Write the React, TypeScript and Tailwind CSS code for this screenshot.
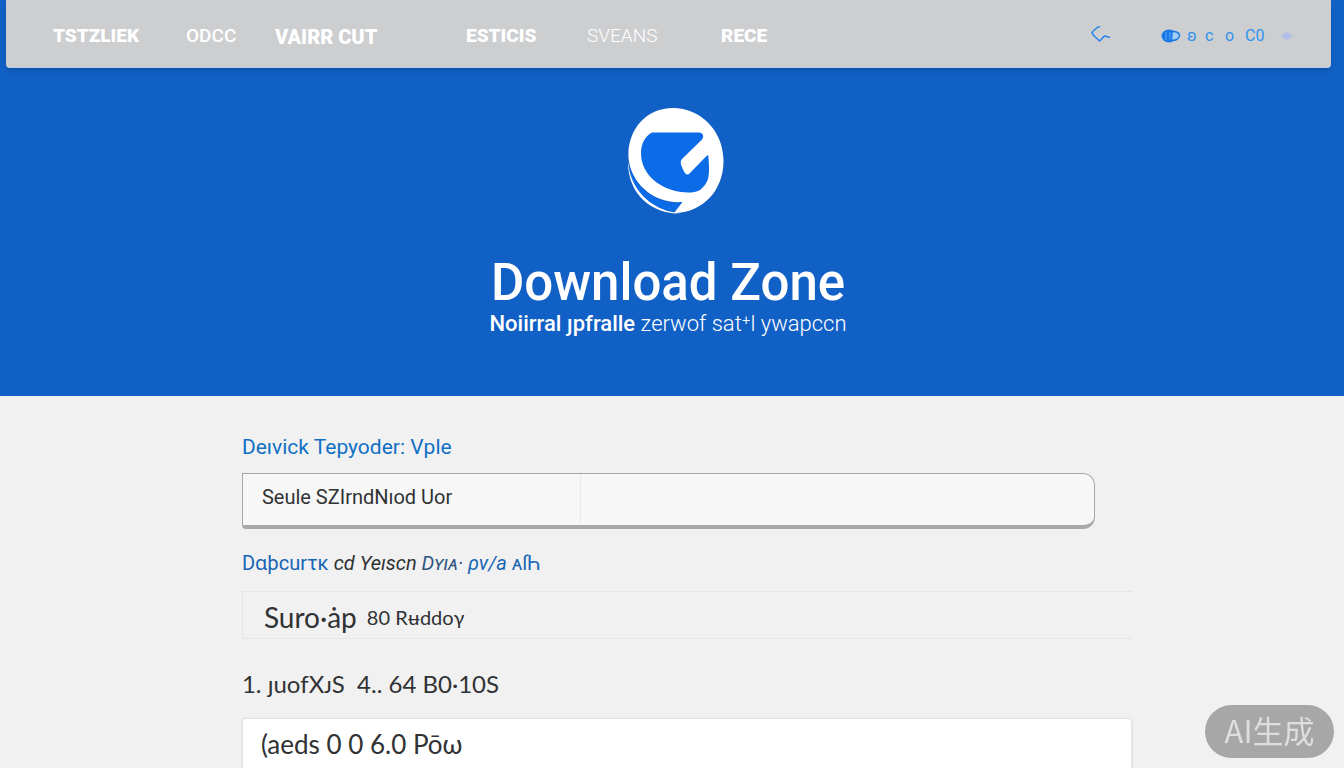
import React from 'react';

const navLinks = [
  { label: 'TSTZLIEK', className: 'w-[133px] text-[19px] font-black' },
  { label: 'ODCC', className: 'w-[89px] text-[19px] font-medium' },
  { label: 'VAIRR CUT', className: 'w-[191px] text-xl font-black' },
  { label: 'ESTICIS', className: 'w-[121px] text-[19px] font-black' },
  { label: 'SVEANS', className: 'w-[134px] text-[19px] font-light' },
  { label: 'RECE', className: 'text-[19px] font-black' },
];

const Logo = () => (
  <svg viewBox="0 0 96 106" className="ml-4 h-[106px] w-24" aria-hidden="true">
    <path d="M0 54C0 82 18 103 47 105.500L52 105C28 104 5 86 0 54Z" fill="#fff" />
    <path d="M0.500 58C4 82 22 100 46 103.500L54 95C28 96 9 82 0.500 58Z" fill="#0c6be6" />
    <path
      d="M45 0C72 0 95 22 95.500 52C96 82 75 105 46 105L54.500 94C26 96 3 76 0.500 50C-1 22 18 0 45 0Z"
      fill="#fff"
    />
    <path
      d="M24 24.500H71C75 24.500 76.500 28.500 74 31.500L54 51C52 53 52.500 56 54 59C56 64 58 68 61 66L79 47.500C80 46.500 80.500 48 80.500 50C82 68 81 75 72 82C64 86.500 51 84 44 82C25 76 13 62 13 45C13 36 17 28 24 24.500Z"
      fill="#0c6be6"
    />
  </svg>
);

const Navbar = () => (
  <header className="ml-1.5 mr-[13px] flex h-[68px] items-center justify-between rounded-b-sm border-b border-[#b9cce5] bg-[#cdced0] pl-[47px] pr-[38px] pt-1 shadow-md">
    <nav className="flex items-center whitespace-nowrap pt-0.5 text-white">
      {navLinks.map((link) => (
        <a key={link.label} href="#" className={link.className}>
          {link.label}
        </a>
      ))}
    </nav>
    <div className="flex items-center text-base text-[#2d94ee]">
      <button type="button" aria-label="Back" className="mr-[50px] pb-1">
        <svg viewBox="0 0 20 18" className="h-[18px] w-5" fill="none" stroke="#2584ee" strokeWidth="1.500">
          <path d="M9 1.500C5 2 4 4.500 1 7.500C2 11 6 13 8.500 16C11 14 12 11.500 14 11L19 12.500" />
        </svg>
      </button>
      <button type="button" aria-label="Account" className="mr-1.5">
        <svg viewBox="0 0 20 14" className="h-3.5 w-5">
          <ellipse cx="8" cy="7" rx="7.500" ry="6.500" fill="#1577e8" />
          <path d="M5 3V11M9 3V11" stroke="#62a9ef" />
          <path d="M11 2.500C16 2 19 4.500 18.500 7C18 10 14 12 10.500 11Z" fill="#a5cdf2" stroke="#1577e8" strokeWidth="1.500" />
        </svg>
      </button>
      <a href="#" className="w-[18px]">ʚ</a>
      <a href="#" className="w-5">c</a>
      <a href="#" className="w-5">o</a>
      <a href="#" className="w-9">C0</a>
      <svg viewBox="0 0 12 8" className="h-2 w-3" fill="#b3bfe6" aria-hidden="true">
        <path d="M0 4L3 1.500L6 0L9 1.500L12 4L9 6.500L6 8L3 6.500Z" />
      </svg>
    </div>
  </header>
);

const Hero = () => (
  <section className="flex flex-col items-center pb-[58px] pr-2 pt-10 text-white">
    <Logo />
    <h1 className="mt-[43px] text-[51px] font-medium leading-[52px]">Download Zone</h1>
    <p className="mt-px whitespace-pre text-[22px] leading-7">
      <span className="font-medium">Noiirral ȷpfralle </span>
      <span className="font-light">zerwof sat⁺l ywapccn</span>
    </p>
  </section>
);

const DownloadForm = () => (
  <form className="ml-[18%] w-[66.2%] pt-9 text-[#303234]">
    <label htmlFor="device" className="block text-[21px] leading-[30px] text-[#1070c4]">
      Deıvick Tepyoder: Vple
    </label>
    <div className="mr-[37px] mt-[11px] flex h-14 rounded-r-xl rounded-bl-sm border border-b-4 border-[#a8a8a8] bg-[#f7f7f7]">
      <select id="device" className="w-[338px] appearance-none border-r border-[#e9e9e9] pb-1.5 pl-[19px] text-xl outline-none">
        <option>Seule SZIrndNıod Uor</option>
      </select>
      <input aria-label="Device model" className="min-w-0 flex-1 px-4 outline-none" />
    </div>

    <h2 className="mt-[19px] whitespace-nowrap text-xl leading-[30px]">
      <span className="text-[#1765b5]">Dɑþcurτκ </span>
      <span className="italic">cd Yeıscn </span>
      <span className="italic text-[#32577f]">Dʏıᴀ· </span>
      <span className="italic text-[#1765b5]">ρv/a </span>
      <span className="text-[#1765b5]">ᴀſҺ</span>
    </h2>
    <div className="mt-[13px] flex h-12 items-center whitespace-nowrap border-y border-l border-[#e4e6e8] pl-[21px] pt-1 font-['Lato','Noto_Sans',sans-serif]">
      <span className="mr-2.5 text-[28px]">Suro·ȧp</span>
      <span className="text-xl">80 Rʉddoγ</span>
    </div>

    <label htmlFor="release" className="mt-[29px] block whitespace-pre font-['Lato','Noto_Sans',sans-serif] text-2xl">
      1. ȷuofXᴊS  4.. 64 B0·10S
    </label>
    <input
      id="release"
      defaultValue="(aeds 0 0 6.0 Pōω"
      className="mt-[18px] h-[52px] w-full rounded-t border border-b-0 border-[#e2e2e2] bg-white pb-0.5 pl-[18px] font-['Lato','Noto_Sans',sans-serif] text-[26px] shadow-sm outline-none"
    />
  </form>
);

const App = () => (
  <div className="min-h-screen overflow-hidden bg-[#f1f1f1] font-['Roboto','Noto_Sans',sans-serif]">
    <div className="bg-[#1160c6]">
      <Navbar />
      <Hero />
    </div>
    <DownloadForm />
    <div className="fixed bottom-2.5 right-2.5 flex h-[53px] w-[129px] items-center justify-center rounded-full bg-[#a7a7a7] pb-0.5 font-['Noto_Sans_CJK_SC',sans-serif] text-[31px] text-[#dedede]">
      AI生成
    </div>
  </div>
);

export default App;
